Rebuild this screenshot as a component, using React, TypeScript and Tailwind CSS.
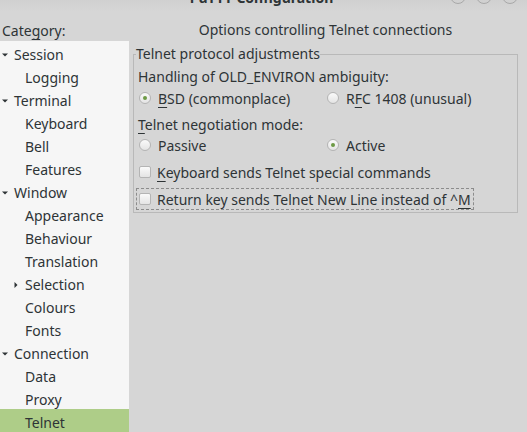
import type { ReactNode } from "react"

type TreeItem = {
  label: string
  level: 0 | 1
  arrow?: "down" | "right"
  selected?: boolean
}

const TREE: TreeItem[] = [
  { label: "Session", level: 0, arrow: "down" },
  { label: "Logging", level: 1 },
  { label: "Terminal", level: 0, arrow: "down" },
  { label: "Keyboard", level: 1 },
  { label: "Bell", level: 1 },
  { label: "Features", level: 1 },
  { label: "Window", level: 0, arrow: "down" },
  { label: "Appearance", level: 1 },
  { label: "Behaviour", level: 1 },
  { label: "Translation", level: 1 },
  { label: "Selection", level: 1, arrow: "right" },
  { label: "Colours", level: 1 },
  { label: "Fonts", level: 1 },
  { label: "Connection", level: 0, arrow: "down" },
  { label: "Data", level: 1 },
  { label: "Proxy", level: 1 },
  { label: "Telnet", level: 1, selected: true },
]

function Arrow({ dir }: { dir: "down" | "right" }) {
  if (dir === "down") {
    return (
      <svg width="8" height="8" viewBox="0 0 8 8" className="shrink-0">
        <path d="M1 2.5 L7 2.5 L4 5.5 Z" fill="#2e3436" />
      </svg>
    )
  }
  return (
    <svg width="8" height="8" viewBox="0 0 8 8" className="shrink-0">
      <path d="M2.5 1 L5.5 4 L2.5 7 Z" fill="#2e3436" />
    </svg>
  )
}

function Radio({ checked }: { checked?: boolean }) {
  return (
    <span className="grid size-[12px] shrink-0 place-items-center rounded-full border border-[#b4b4b4] bg-gradient-to-b from-[#fafafa] to-[#e4e4e4]">
      {checked && <span className="size-[4px] rounded-full bg-[#6d9a45]" />}
    </span>
  )
}

function Check() {
  return (
    <span className="size-[12px] shrink-0 rounded-[2px] border border-[#b4b4b4] bg-gradient-to-b from-[#fafafa] to-[#e4e4e4]" />
  )
}

function U({ children }: { children: ReactNode }) {
  return <span className="underline decoration-[#2e3436] decoration-1 underline-offset-[3px]">{children}</span>
}

export default function App() {
  return (
    <div
      className="flex h-[432px] w-[527px] flex-col overflow-hidden bg-[#d6d6d6] text-[14px] text-[#2e3436]"
      style={{ fontFamily: '"Noto Sans", "DejaVu Sans", sans-serif' }}
    >
      <div className="relative flex h-[12px] shrink-0 items-end justify-center overflow-hidden bg-gradient-to-b from-[#d0d0d0] to-[#d6d6d6]">
        <span className="mb-[4px] h-[20px] pr-[4px] font-bold leading-[20px] text-[#2e3436]">PuTTY Configuration</span>
        <div className="absolute right-[9px] bottom-[8px] flex gap-[10px]">
          <span className="size-[16px] rounded-full border border-[#a8a8a8]" />
          <span className="size-[16px] rounded-full border border-[#a8a8a8]" />
          <span className="size-[16px] rounded-full border border-[#a8a8a8]" />
        </div>
      </div>

      <div className="flex min-h-0 flex-1">
        <div className="flex w-[129px] shrink-0 flex-col">
          <div className="h-[31px] pl-[2px] pt-[9px] leading-[20px]">
            Cate<U>g</U>ory:
          </div>
          <div className="flex-1 bg-[#f6f6f6]">
            {TREE.map((item) => (
              <div
                key={item.label}
                className={
                  "flex h-[23px] items-center pt-[4px] " +
                  (item.selected ? "bg-[#aecd88] " : "") +
                  (item.level === 0 ? "pl-[1px]" : item.arrow ? "pl-[12px]" : "pl-[25px]")
                }
              >
                {item.arrow && <Arrow dir={item.arrow} />}
                <span className={item.arrow ? "ml-[5px]" : ""}>{item.label}</span>
              </div>
            ))}
          </div>
        </div>

        <div className="flex flex-1 flex-col pl-[4px] pr-[9px]">
          <div className="h-[32px] pt-[8px] text-center leading-[20px]">Options controlling Telnet connections</div>

          <fieldset className="border border-[#b9b9b9] px-[4px] pb-[2px]">
            <legend className="ml-[-2px] h-[20px] leading-[20px]">Telnet protocol adjustments</legend>
            <div className="mt-[3px] h-[20px] leading-[20px]">Handling of OLD_ENVIRON ambiguity:</div>
            <div className="mt-[1px] flex h-[20px] items-center">
              <label className="flex w-[189px] items-center gap-[7px] pl-[1px]">
                <Radio checked />
                <span>
                  <U>B</U>SD (commonplace)
                </span>
              </label>
              <label className="flex items-center gap-[7px]">
                <Radio />
                <span>
                  R<U>F</U>C 1408 (unusual)
                </span>
              </label>
            </div>
            <div className="mt-[7px] h-[20px] leading-[20px]">
              <U>T</U>elnet negotiation mode:
            </div>
            <div className="flex h-[20px] items-center">
              <label className="flex w-[189px] items-center gap-[7px] pl-[1px]">
                <Radio />
                <span>Passive</span>
              </label>
              <label className="flex items-center gap-[7px]">
                <Radio checked />
                <span>Active</span>
              </label>
            </div>
            <label className="mt-[7px] flex h-[20px] items-center gap-[6px] pl-[1px]">
              <Check />
              <span>
                <U>K</U>eyboard sends Telnet special commands
              </span>
            </label>
            <div className="mt-[6px] ml-[-2px] flex h-[22px] w-fit items-center gap-[6px] border border-dashed border-[#8c8c8c] pl-[2px] pr-[2px]">
              <Check />
              <span>
                Return key sends Telnet New Line instead of ^<U>M</U>
              </span>
            </div>
          </fieldset>
        </div>
      </div>
    </div>
  )
}
